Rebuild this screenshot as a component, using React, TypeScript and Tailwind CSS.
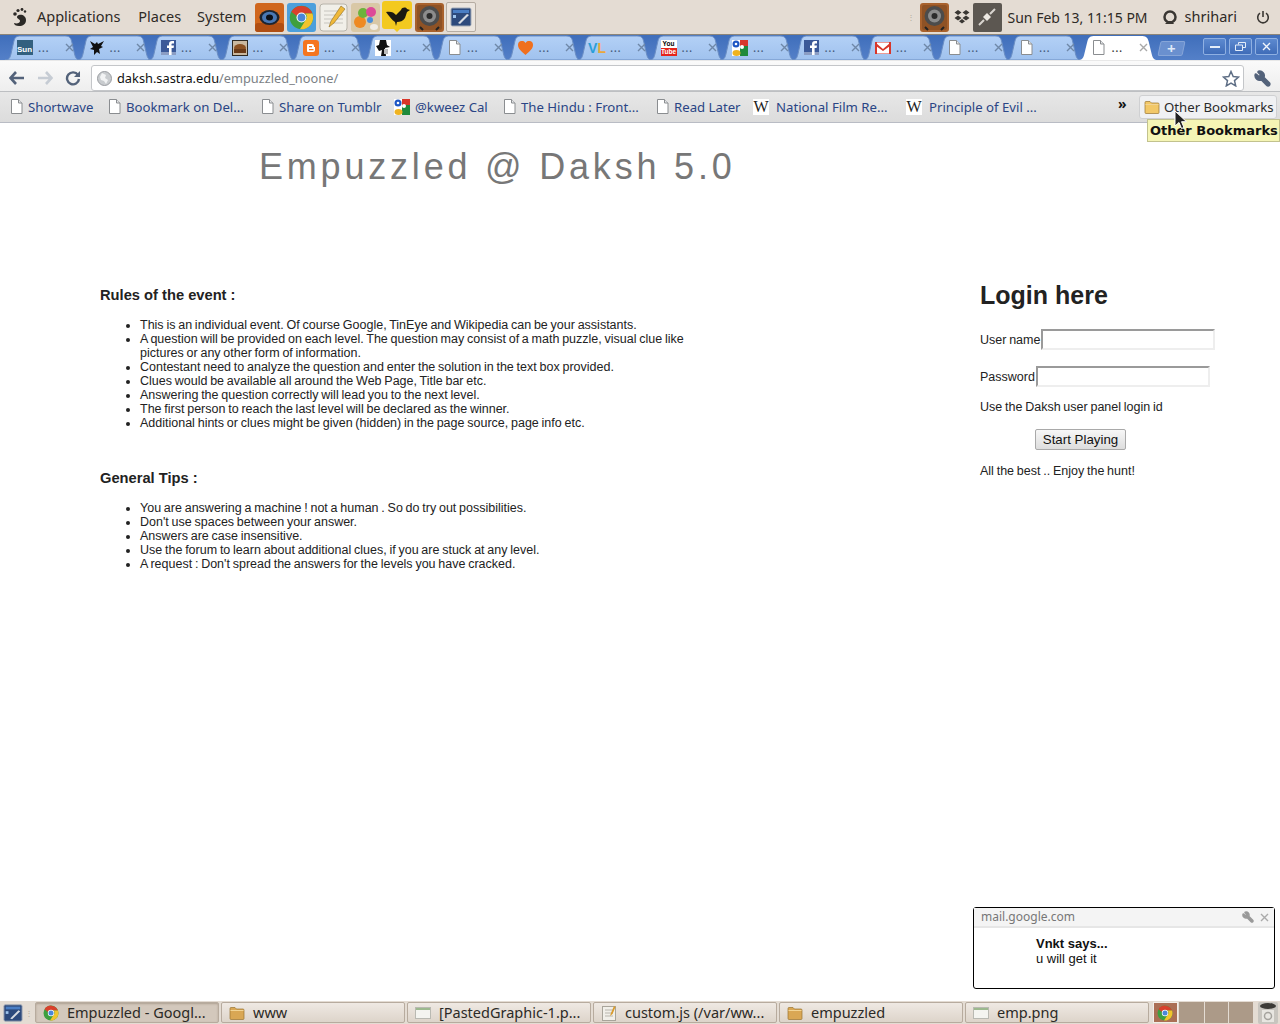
import type { ReactNode } from 'react'
import { Wrench } from 'lucide-react'

const uiFont = 'font-["Noto_Sans",sans-serif]'

/* ─── favicons ─── */
function PageIcon({ className = '' }: { className?: string }) {
  return (
    <svg width="13" height="15" viewBox="0 0 13 15" className={className}>
      <path d="M1.5.5h7l3.500 3.500v10.500h-10.500z" fill="#fff" stroke="#8a8d90" />
      <path d="M8.500.5v3.500h3.500" fill="#e4e6e8" stroke="#8a8d90" />
    </svg>
  )
}

function Facebook() {
  return (
    <svg width="15" height="15" viewBox="0 0 15 15">
      <rect width="15" height="15" fill="#3b5998" />
      <rect y="12" width="15" height="3" fill="#8b9dc3" />
      <path d="M8 15V8H6V5.500h2V4c0-2 1-3 3-3h2v2.500h-1.500c-.7 0-1 .3-1 1v1H13l-.4 2.500h-2V15z" fill="#fff" />
    </svg>
  )
}

function Google() {
  return (
    <svg width="16" height="16" viewBox="0 0 16 16">
      <rect width="16" height="16" fill="#fff" />
      <rect x="8" width="8" height="6" fill="#d8362a" />
      <rect x="8" y="6" width="8" height="10" fill="#1f8a3b" />
      <circle cx="4" cy="4" r="3.500" fill="#1d56c4" />
      <circle cx="4" cy="4" r="1.300" fill="#fff" />
      <ellipse cx="4.500" cy="13" rx="4" ry="3" fill="#efb320" />
      <circle cx="10" cy="7" r="2" fill="#fff" />
    </svg>
  )
}

function Wiki() {
  return (
    <span className='mr-[2px] flex h-4 w-4 items-center justify-center bg-white font-["Liberation_Serif",serif] text-[16px] leading-none text-[#222]'>
      W
    </span>
  )
}

function Chrome({ size = 16 }: { size?: number }) {
  return (
    <svg width={size} height={size} viewBox="0 0 16 16">
      <circle cx="8" cy="8" r="7.500" fill="#3f9f3f" />
      <path d="M1.500 4.300A7.500 7.500 0 0 1 15 5.500H8a3 3 0 0 0-3 1.500z" fill="#d8402c" />
      <path d="M15 5.500A7.500 7.500 0 0 1 7 15.500l3.500-5.500a3 3 0 0 0 0-4.500z" fill="#f2c42c" />
      <circle cx="8" cy="8" r="3.200" fill="#fff" />
      <circle cx="8" cy="8" r="2.500" fill="#4a86d8" />
    </svg>
  )
}

const tabIcons: ReactNode[] = [
  <span key="sun" className='flex h-[15px] w-4 items-end bg-[#33607f] font-["Liberation_Sans",sans-serif] text-[8px] leading-[10px] font-bold text-white'>
    Sun
  </span>,
  <svg key="bird" width="16" height="15" viewBox="0 0 16 15">
    <path d="M1 1l5 3 2-2 1 2 6-3-3 5 2 1-4 2 1 5-3-2-3 3 0-5-4-1 3-2z" fill="#111" />
  </svg>,
  <Facebook key="fb" />,
  <svg key="cup" width="16" height="16" viewBox="0 0 16 16">
    <rect width="16" height="16" fill="#2e2a24" />
    <rect x="1" y="1" width="14" height="14" fill="#c9b8a0" />
    <ellipse cx="8" cy="8" rx="6" ry="4" fill="#8a5022" />
    <rect x="2" y="9" width="12" height="4" fill="#6a3a18" />
  </svg>,
  <svg key="blogger" width="16" height="16" viewBox="0 0 16 16">
    <rect width="16" height="16" rx="3" fill="#f5751f" />
    <path d="M5 4h4a2 2 0 0 1 2 2v1h1v3a2 2 0 0 1-2 2H5a1 1 0 0 1-1-1V5a1 1 0 0 1 1-1z" fill="#fff" />
    <rect x="6" y="6" width="3" height="1.300" fill="#f5751f" />
    <rect x="6" y="9" width="4.500" height="1.300" fill="#f5751f" />
  </svg>,
  <svg key="spy" width="16" height="16" viewBox="0 0 16 16">
    <rect width="16" height="16" fill="#fff" />
    <path d="M1 6l3-1 1-5h6l1 5 3 2-5 1 1 8H6l1-6-3 1z" fill="#111" />
    <path d="M9 9h4v5H9z" fill="#bbb" />
  </svg>,
  <PageIcon key="p1" />,
  <svg key="heart" width="15" height="14" viewBox="0 0 15 14">
    <path d="M7.500 14C3 10 0 7.500 0 4a4 4 0 0 1 7.500-2A4 4 0 0 1 15 4c0 3.500-3 6-7.500 10z" fill="#f0701e" />
  </svg>,
  <span key="vl" className='font-["Liberation_Sans",sans-serif] text-[14px] leading-none font-bold'>
    <span className="text-[#2a9fd8]">V</span>
    <span className="text-[#e8a83c]">L</span>
  </span>,
  <span key="yt" className='flex h-4 w-4 flex-col items-center bg-white font-["Liberation_Sans",sans-serif] text-[6.500px] leading-[8px] font-bold'>
    <span className="text-black">You</span>
    <span className="w-full bg-[#e5241c] text-center text-white">Tube</span>
  </span>,
  <Google key="g" />,
  <Facebook key="fb2" />,
  <svg key="gmail" width="16" height="12" viewBox="0 0 16 12">
    <rect width="16" height="12" fill="#fff" stroke="#d8362a" />
    <path d="M1 1l7 6 7-6v3l-7 5-7-5zM0 0h2v12H0zM14 0h2v12h-2z" fill="#d8362a" />
  </svg>,
  <PageIcon key="p2" />,
  <PageIcon key="p3" />,
]

function CloseX({ color = '#7f8ea3' }: { color?: string }) {
  return (
    <svg width="9" height="9" viewBox="0 0 9 9">
      <path d="M1 1l7 7M8 1l-7 7" stroke={color} strokeWidth="1.400" />
    </svg>
  )
}

function Tab({ icon, active = false }: { icon: ReactNode; active?: boolean }) {
  return (
    <div className={`relative -ml-[4px] flex h-[25px] shrink-0 items-center ${active ? 'w-[80px] pl-[13px]' : 'w-[75.500px] pl-[12px]'}`}>
      <svg className="absolute inset-0 h-full w-full" viewBox="0 0 76 25" preserveAspectRatio="none">
        <defs>
          <linearGradient id="tabBg" x1="0" y1="0" x2="0" y2="1">
            <stop offset="0" stopColor="#b3d0f6" />
            <stop offset="1" stopColor="#a0c2ee" />
          </linearGradient>
        </defs>
        <path
          d="M0 25c4 0 5-2 6-6L9 6c1-4 3-5 7-5h44c4 0 6 1 7 5l3 13c1 4 2 6 6 6z"
          fill={active ? '#fff' : 'url(#tabBg)'}
          stroke={active ? 'none' : '#6b8fc4'}
        />
      </svg>
      <span className="relative flex w-4 items-center justify-center">{icon}</span>
      <span className={`relative ml-[5px] text-[12px] leading-none tracking-[0.5px] ${active ? 'text-[#333]' : 'text-[#44597a]'}`}>...</span>
      <span className={`absolute top-[8px] ${active ? 'right-[10px]' : 'right-[7px]'}`}>
        <CloseX color={active ? '#a9a9a9' : '#6f88a8'} />
      </span>
    </div>
  )
}

function WindowButton({ children }: { children: ReactNode }) {
  return (
    <div className="flex h-[17px] w-[23px] items-center justify-center rounded-[2px] border border-[#8fb0e2] bg-gradient-to-b from-[#5d8ad0] to-[#3f6cb8]">
      {children}
    </div>
  )
}

function Bookmark({ icon, label, width }: { icon: ReactNode; label: string; width: number }) {
  return (
    <div className="flex shrink-0 items-center gap-[5px]" style={{ width }}>
      {icon}
      <span className="pt-[2px] text-[13.200px] leading-none whitespace-nowrap text-[#2a4585]">{label}</span>
    </div>
  )
}

/* ─── panel launchers ─── */
function Launcher({ children, framed = false }: { children: ReactNode; framed?: boolean }) {
  return (
    <div className={`flex h-[30px] w-[30px] items-center justify-center ${framed ? 'rounded-[2px] border border-[#b5aca2] bg-[#ece6df]' : ''}`}>
      {children}
    </div>
  )
}

function EyeIcon() {
  return (
    <svg width="29" height="29" viewBox="0 0 29 29">
      <rect width="29" height="29" rx="3" fill="#d0661c" />
      <rect y="20" width="29" height="9" rx="3" fill="#b04e12" />
      <ellipse cx="14.500" cy="14.500" rx="10" ry="7.500" fill="#1c2430" />
      <ellipse cx="14.500" cy="14.500" rx="7.500" ry="5.800" fill="#4a78b4" />
      <ellipse cx="14.500" cy="14.500" rx="3.500" ry="3" fill="#0c1018" />
    </svg>
  )
}

function ChromeTile() {
  return (
    <svg width="29" height="29" viewBox="0 0 29 29">
      <rect width="29" height="29" rx="3" fill="#4c9fdc" />
      <g transform="translate(2 2) scale(1.560)">
        <circle cx="8" cy="8" r="7.500" fill="#3f9f3f" />
        <path d="M1.500 4.300A7.500 7.500 0 0 1 15 5.500H8a3 3 0 0 0-3 1.500z" fill="#d8402c" />
        <path d="M15 5.500A7.500 7.500 0 0 1 7 15.500l3.500-5.500a3 3 0 0 0 0-4.500z" fill="#f2c42c" />
        <circle cx="8" cy="8" r="3.200" fill="#fff" />
        <circle cx="8" cy="8" r="2.500" fill="#4a86d8" />
      </g>
    </svg>
  )
}

function NotepadIcon() {
  return (
    <svg width="29" height="29" viewBox="0 0 29 29">
      <rect x="1" y="1" width="27" height="27" rx="3" fill="#f1efe9" stroke="#b8b4aa" />
      <path d="M5 8h19M5 12h19M5 16h19M5 20h19" stroke="#c7c5bf" />
      <path d="M10 24l2-6L22 3l4 3L15 20z" fill="#f0b93a" stroke="#8d6a20" strokeWidth=".6" />
    </svg>
  )
}

function PaintIcon() {
  return (
    <svg width="29" height="29" viewBox="0 0 29 29">
      <rect width="29" height="29" rx="3" fill="#d9c8a6" />
      <circle cx="9" cy="19" r="6" fill="#ee8a22" />
      <circle cx="12" cy="10" r="5" fill="#6cb33c" />
      <circle cx="20" cy="9" r="5" fill="#dc4a98" />
      <circle cx="19" cy="17" r="3" fill="#4a8ed8" />
      <ellipse cx="23" cy="24" rx="4" ry="3" fill="#f0ece4" />
    </svg>
  )
}

function BirdIcon() {
  return (
    <svg width="30" height="32" viewBox="0 0 30 32">
      <path d="M3 0h24a3 3 0 0 1 3 3v22a3 3 0 0 1-3 3h-9l-3 3-3-3H3a3 3 0 0 1-3-3V3a3 3 0 0 1 3-3z" fill="#f3c91f" />
      <path d="M4 11c4-1 8 0 10 3l5-5c1-3 5-3 6-1l3 1-3 2-2 6c-2 3-5 4-8 4l-1 4-1-4C10 19 7 15 4 11z" fill="#1c1a12" />
    </svg>
  )
}

function SpeakerIcon() {
  return (
    <svg width="29" height="29" viewBox="0 0 29 29">
      <rect width="29" height="29" rx="3" fill="#a8612c" />
      <rect x="2" y="2" width="25" height="25" rx="2" fill="#8e5225" />
      <circle cx="14.500" cy="13" r="10" fill="#4c4c4c" />
      <circle cx="14.500" cy="13" r="6.500" fill="#8c8c8c" />
      <circle cx="14.500" cy="13" r="3" fill="#2c2c2c" />
      <path d="M5 24l3 3M24 24l-3 3" stroke="#222" strokeWidth="2" />
    </svg>
  )
}

function DesktopIcon({ size = 22 }: { size?: number }) {
  return (
    <svg width={size} height={size} viewBox="0 0 22 22">
      <rect x="1" y="2" width="20" height="18" rx="1.500" fill="#2d4a7c" stroke="#a4acb8" />
      <rect x="3" y="4" width="16" height="3" fill="#4a7ec4" />
      <rect x="3" y="9" width="3" height="3" fill="#9ec4ec" />
      <path d="M8 17l9-9 2 1-9 9z" fill="#d8dce2" />
    </svg>
  )
}

function FolderIcon({ color = '#d9a754' }: { color?: string }) {
  return (
    <svg width="16" height="16" viewBox="0 0 16 16">
      <path d="M1 3.500a1 1 0 0 1 1-1h4l1.500 1.500H14a1 1 0 0 1 1 1v8.500a1 1 0 0 1-1 1H2a1 1 0 0 1-1-1z" fill={color} stroke="#9a7432" strokeWidth=".7" />
      <rect x="1.500" y="5" width="13" height="1" fill="#f2d494" />
    </svg>
  )
}

function ImageThumb() {
  return (
    <svg width="16" height="12" viewBox="0 0 16 12">
      <rect x=".5" y=".5" width="15" height="11" fill="#f4f4f0" stroke="#b9b9b2" />
      <rect x="1" y="1" width="14" height="2" fill="#9cb98e" />
    </svg>
  )
}

function TaskButton({ icon, label, active = false }: { icon: ReactNode; label: string; active?: boolean }) {
  return (
    <div
      className={`flex h-[21px] w-[184px] shrink-0 items-center gap-[8px] rounded-[2px] border border-[#b7ab9e] pl-[7px] ${
        active ? 'bg-[#d3c8bc] shadow-[inset_0_1px_2px_rgba(90,70,50,0.3)]' : 'bg-gradient-to-b from-[#efe9e3] to-[#ddd4ca]'
      }`}
    >
      <span className="flex w-4 shrink-0 items-center justify-center">{icon}</span>
      <span className="text-[14.500px] leading-none whitespace-nowrap text-[#2c2a26]">{label}</span>
    </div>
  )
}

const rules = [
  'This is an individual event. Of course Google, TinEye and Wikipedia can be your assistants.',
  'A question will be provided on each level. The question may consist of a math puzzle, visual clue like pictures or any other form of information.',
  'Contestant need to analyze the question and enter the solution in the text box provided.',
  'Clues would be available all around the Web Page, Title bar etc.',
  'Answering the question correctly will lead you to the next level.',
  'The first person to reach the last level will be declared as the winner.',
  'Additional hints or clues might be given (hidden) in the page source, page info etc.',
]

const tips = [
  'You are answering a machine ! not a human . So do try out possibilities.',
  "Don't use spaces between your answer.",
  'Answers are case insensitive.',
  'Use the forum to learn about additional clues, if you are stuck at any level.',
  "A request : Don't spread the answers for the levels you have cracked.",
]

function RuleList({ items }: { items: string[] }) {
  return (
    <ul className="ml-[40px] list-disc text-[12.500px] leading-[14px] text-[#222] [word-spacing:-0.7px]">
      {items.map((item) => (
        <li key={item}>{item}</li>
      ))}
    </ul>
  )
}

export default function App() {
  return (
    <div className={`relative flex h-[1024px] w-[1280px] flex-col overflow-hidden bg-white ${uiFont}`}>
      {/* gnome top panel */}
      <header className="flex h-[34px] shrink-0 items-center bg-[#e4dcd3] pl-[10px] text-[14.500px] text-[#2e2a26]">
        <svg width="19" height="20" viewBox="0 0 19 20">
          <path d="M9 8c3-1 7 1 7 5s-3 6-7 6c-3 0-5-1-5-3 3 1 6 0 6-2s-3-2-3-4c0-1 1-2 2-2z" fill="#2b2926" />
          <circle cx="5" cy="7" r="1.800" fill="#2b2926" />
          <circle cx="8" cy="3.500" r="1.600" fill="#2b2926" />
          <circle cx="12" cy="2.500" r="1.400" fill="#2b2926" />
          <circle cx="15" cy="4.500" r="1.200" fill="#2b2926" />
        </svg>
        <span className="ml-[8px]">Applications</span>
        <span className="ml-[18px]">Places</span>
        <span className="ml-[16px]">System</span>
        <div className="ml-[8px] flex items-center gap-[2px]">
          <Launcher><EyeIcon /></Launcher>
          <Launcher><ChromeTile /></Launcher>
          <Launcher><NotepadIcon /></Launcher>
          <Launcher><PaintIcon /></Launcher>
          <Launcher><BirdIcon /></Launcher>
          <Launcher><SpeakerIcon /></Launcher>
          <Launcher framed><DesktopIcon /></Launcher>
        </div>
        <div className="ml-auto flex items-center pr-[10px]">
          <span className="mr-[5px] text-[8px] text-[#b3a99d]">⋮</span>
          <SpeakerIcon />
          <svg width="16" height="14" viewBox="0 0 16 14" className="ml-[5px]">
            <path d="M4 0l3.500 2.500L4 5 .5 2.500zM12 0l3.500 2.500L12 5 8.500 2.500zM4 5.500L7.500 8 4 10.500.5 8zM12 5.500L15.500 8 12 10.500 8.500 8zM8 9l3 2.200L8 13.500l-3-2.300z" fill="#3a3733" />
          </svg>
          <div className="ml-[3px] flex h-[29px] w-[29px] items-center justify-center rounded-[2px] bg-[#5c5751]">
            <svg width="22" height="22" viewBox="0 0 22 22">
              <path d="M3 19l5-5M14 8l5-5" stroke="#d8d4ce" strokeWidth="2" />
              <path d="M7 11l4-4 4 4-4 4z" fill="#ece8e2" />
            </svg>
          </div>
          <span className="ml-[6px] w-[152px] text-[14px] whitespace-nowrap">Sun Feb 13, 11:15 PM</span>
          <svg width="16" height="15" viewBox="0 0 16 15" className="ml-[2px]">
            <circle cx="8" cy="7" r="5.500" fill="none" stroke="#3a3733" strokeWidth="2.500" />
            <path d="M3 14l3-3h4l2 3z" fill="#3a3733" />
          </svg>
          <span className="ml-[7px]">shrihari</span>
          <svg width="14" height="14" viewBox="0 0 14 14" className="ml-[19px]">
            <path d="M4 3.200a5.300 5.300 0 1 0 6 0M7 1v6" fill="none" stroke="#3a3733" strokeWidth="1.600" />
          </svg>
        </div>
      </header>

      {/* tab strip */}
      <div className="flex h-[27px] shrink-0 items-end border-t border-b border-t-[#8c8579] border-b-[#e8e8e8] bg-gradient-to-b from-[#3f6ebb] to-[#5480c8] pl-[9px]">
        {tabIcons.map((icon, i) => (
          <Tab key={i} icon={icon} />
        ))}
        <Tab active icon={<PageIcon />} />
        <div className="mb-[4px] ml-[1px] flex h-[15px] w-[25px] -skew-x-12 items-center justify-center rounded-[2px] border border-[#86a5d8] bg-[#6a90cf]">
          <span className="skew-x-12 text-[15px] leading-none font-bold text-[#dfe9f8]">+</span>
        </div>
        <div className="mb-[5px] ml-auto flex gap-[3px] pr-[2px]">
          <WindowButton><span className="h-[2px] w-[10px] bg-[#e4edf9]" /></WindowButton>
          <WindowButton>
            <svg width="11" height="9" viewBox="0 0 11 9"><path d="M3.500 2.500v-2h7v5h-3M.5 3h7v5.500h-7z" fill="none" stroke="#e4edf9" /></svg>
          </WindowButton>
          <WindowButton><CloseX color="#f2f6fc" /></WindowButton>
        </div>
      </div>

      {/* toolbar */}
      <div className="flex h-[30px] shrink-0 items-center bg-gradient-to-b from-[#fafafa] to-[#eeeeee] pt-[4px] pl-[9px]">
        <svg width="16" height="14" viewBox="0 0 16 14">
          <path d="M7 1L1.500 7 7 13M2 7h13" fill="none" stroke="#53627a" strokeWidth="2.600" />
        </svg>
        <svg width="16" height="14" viewBox="0 0 16 14" className="ml-[12px]">
          <path d="M9 1l5.500 6L9 13M14 7H1" fill="none" stroke="#c6ccd4" strokeWidth="2.600" />
        </svg>
        <svg width="16" height="16" viewBox="0 0 16 16" className="ml-[12px]">
          <path d="M13 5a6 6 0 1 0 1 4" fill="none" stroke="#53627a" strokeWidth="2.400" />
          <path d="M15 1v6H9z" fill="#53627a" />
        </svg>
        <div className="ml-[10px] flex h-[26px] w-[1153px] items-center rounded-[3px] border border-[#c4c6c9] bg-white pl-[5px] text-[12.800px]">
          <svg width="15" height="15" viewBox="0 0 15 15">
            <circle cx="7.500" cy="7.500" r="7" fill="#c9cccf" stroke="#9a9da1" />
            <path d="M5 2l4 2-1 3 3 2-2 4-2-3-3-1-1-3z" fill="#f2f3f4" />
          </svg>
          <span className="ml-[5px] leading-none text-[#111]">daksh.sastra.edu</span>
          <span className="leading-none text-[#7b7f85]">/empuzzled_noone/</span>
          <svg width="18" height="17" viewBox="0 0 18 17" className="mr-[3px] ml-auto">
            <path d="M9 1.500l2.200 5 5.300.5-4 3.600 1.200 5.300L9 13.200l-4.700 2.700 1.200-5.300-4-3.600 5.300-.5z" fill="#fff" stroke="#5e6e85" strokeWidth="1.500" />
          </svg>
        </div>
        <Wrench size={17} strokeWidth={3} fill="#53627a" color="#53627a" className="ml-[10px] -scale-x-100" />
      </div>

      {/* bookmarks bar */}
      <div className="flex h-[32px] shrink-0 items-center border-t border-b border-t-[#bdbfc2] border-b-[#b9bcc4] bg-gradient-to-b from-[#e7e7e7] to-[#dcdcdc] pl-[10px]">
        <Bookmark icon={<PageIcon />} label="Shortwave" width={98} />
        <Bookmark icon={<PageIcon />} label="Bookmark on Del..." width={153} />
        <Bookmark icon={<PageIcon />} label="Share on Tumblr" width={133} />
        <Bookmark icon={<Google />} label="@kweez Cal" width={109} />
        <Bookmark icon={<PageIcon />} label="The Hindu : Front..." width={153} />
        <Bookmark icon={<PageIcon />} label="Read Later" width={97} />
        <Bookmark icon={<Wiki />} label="National Film Re..." width={153} />
        <Bookmark icon={<Wiki />} label="Principle of Evil ..." width={212} />
        <span className="mb-[6px] text-[14px] leading-none font-bold text-[#111]">»</span>
        <div className="mr-[3px] ml-auto flex h-[24px] w-[138px] items-center gap-[4px] rounded-[3px] border border-[#cfd0d2] bg-[#f0f1f3] pl-[4px]">
          <FolderIcon color="#f2c868" />
          <span className="pt-[2px] text-[13.200px] leading-none whitespace-nowrap text-[#2a2a2a]">Other Bookmarks</span>
        </div>
      </div>

      {/* page */}
      <main className='flex-1 font-["Liberation_Sans",sans-serif] text-[#222]'>
        <h1 className="mt-[21px] ml-[259px] text-[36px] leading-[46px] tracking-[3.800px] text-[#777]">Empuzzled @ Daksh 5.0</h1>
        <div className="mt-[91px] flex">
          <section className="ml-[100px] w-[592px]">
            <h2 className="mt-[6px] text-[14.700px] leading-[17px] font-bold text-[#222]">Rules of the event :</h2>
            <div className="mt-[14px]"><RuleList items={rules} /></div>
            <h2 className="mt-[40px] text-[14.700px] leading-[17px] font-bold text-[#222]">General Tips :</h2>
            <div className="mt-[14px]"><RuleList items={tips} /></div>
          </section>
          <aside className="ml-[288px] text-[12.500px] leading-[14px] [word-spacing:-0.7px]">
            <h2 className="text-[25px] leading-[29px] font-bold text-[#222] [word-spacing:0]">Login here</h2>
            <label className="mt-[19px] flex items-center gap-[1px]">
              User name
              <input className="h-[21px] w-[174px] border-2 border-t-[#9a9a9a] border-r-[#eeeeee] border-b-[#eeeeee] border-l-[#9a9a9a] bg-white" />
            </label>
            <label className="mt-[16px] flex items-center gap-[1px]">
              Password
              <input className="h-[21px] w-[174px] border-2 border-t-[#9a9a9a] border-r-[#eeeeee] border-b-[#eeeeee] border-l-[#9a9a9a] bg-white" />
            </label>
            <p className="mt-[13px]">Use the Daksh user panel login id</p>
            <button className="mt-[15px] ml-[55px] flex h-[21px] w-[91px] items-center justify-center rounded-[2px] border border-[#a9a9a9] bg-gradient-to-b from-[#f7f7f7] to-[#dddddd] text-[13.300px] text-[#111] [word-spacing:0]">
              Start Playing
            </button>
            <p className="mt-[14px]">All the best .. Enjoy the hunt!</p>
          </aside>
        </div>
      </main>

      {/* bottom panel */}
      <footer className="flex h-[23px] shrink-0 items-center gap-[2px] bg-[#e4dcd3] pl-[2px]">
        <div className="flex h-[21px] w-[21px] items-center justify-center">
          <DesktopIcon size={20} />
        </div>
        <span className="text-[8px] text-[#b3a99d]">⋮</span>
        <TaskButton active icon={<Chrome />} label="Empuzzled - Googl..." />
        <TaskButton icon={<FolderIcon />} label="www" />
        <TaskButton icon={<ImageThumb />} label="[PastedGraphic-1.p..." />
        <TaskButton
          icon={
            <svg width="14" height="16" viewBox="0 0 14 16">
              <rect x=".5" y="1.500" width="13" height="14" fill="#f1efe9" stroke="#a8a49a" />
              <path d="M3 5h8M3 8h8M3 11h8" stroke="#b8b5ad" />
              <path d="M8 11l1-3 3-7 1.500 1-3 7z" fill="#d99a2a" />
            </svg>
          }
          label="custom.js (/var/ww..."
        />
        <TaskButton icon={<FolderIcon />} label="empuzzled" />
        <TaskButton icon={<ImageThumb />} label="emp.png" />
        <div className="ml-[2px] flex h-[21px] w-[100px] items-stretch gap-[1px] bg-[#e4dcd3]">
          <div className="flex w-[25px] items-center justify-center border border-[#f2eee9] bg-[#ab6f55]">
            <Chrome />
          </div>
          <div className="w-[25px] bg-[#ac9a88]" />
          <div className="w-[24px] bg-[#ac9a88]" />
          <div className="w-[24px] bg-[#ac9a88]" />
        </div>
        <svg width="22" height="22" viewBox="0 0 22 22" className="ml-[2px]">
          <rect x="1" y="0" width="20" height="22" rx="2" fill="#c8c5bf" />
          <ellipse cx="11" cy="4" rx="8" ry="3" fill="#3c3a36" />
          <rect x="5" y="8" width="12" height="12" fill="#e8e6e1" />
          <circle cx="11" cy="14" r="3.500" fill="none" stroke="#a5a39e" strokeWidth="1.500" />
        </svg>
      </footer>

      {/* bookmark tooltip */}
      <div className="absolute top-[119px] left-[1147px] flex h-[23px] w-[133px] items-center border border-[#c2c28e] bg-[#f5f5b5] pt-[1px] pl-[2px] font-['DejaVu_Sans',sans-serif] text-[13px] font-bold whitespace-nowrap text-[#111]">
        Other Bookmarks
      </div>

      {/* mouse cursor */}
      <svg width="13" height="21" viewBox="0 0 13 21" className="absolute top-[110px] left-[1174px]">
        <path d="M1 1v15l4-3.500 2.500 6 2.500-1-2.500-5.800h5z" fill="#222" stroke="#fff" />
      </svg>

      {/* desktop notification */}
      <div className='absolute top-[907px] left-[973px] h-[82px] w-[302px] rounded-[3px] border border-black bg-white font-["Liberation_Sans",sans-serif]'>
        <div className="flex h-[20px] items-center justify-between border-b-2 border-[#e6e6e6] bg-[#f4f4f4] pr-[5px] pl-[7px]">
          <span className={`text-[12px] leading-none text-[#777] ${uiFont}`}>mail.google.com</span>
          <div className="flex items-center gap-[6px]">
            <Wrench size={12} strokeWidth={3} fill="#999" color="#999" className="-scale-x-100" />
            <CloseX color="#aaa" />
          </div>
        </div>
        <div className="mt-[8px] ml-[62px] text-[13px] leading-[15px] text-[#111]">
          <p className="font-bold">Vnkt says...</p>
          <p>u will get it</p>
        </div>
      </div>
    </div>
  )
}
